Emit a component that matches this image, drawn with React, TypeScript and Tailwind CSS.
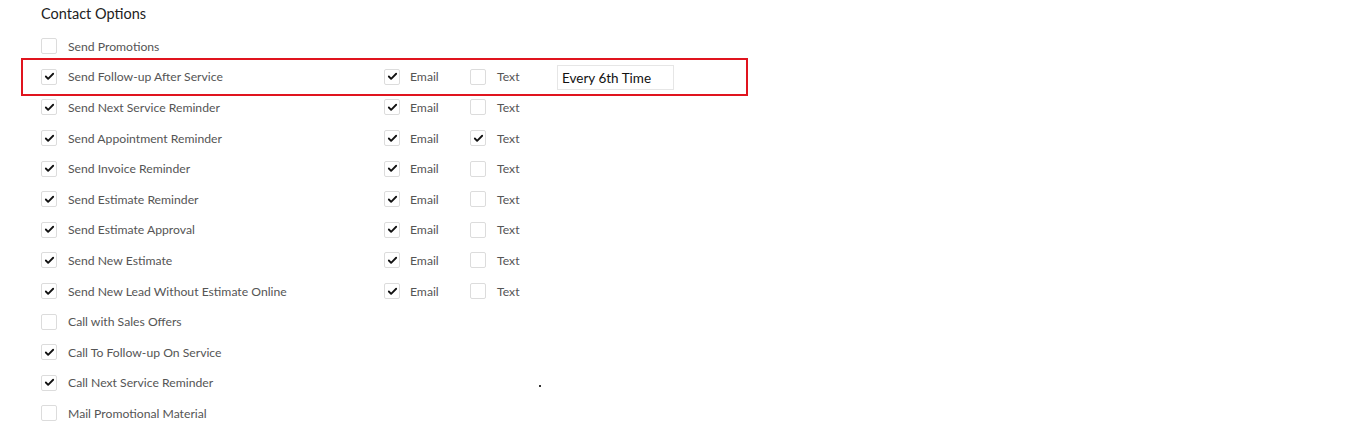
import { Check } from "lucide-react";

type Row = {
  label: string;
  checked: boolean;
  email?: boolean;
  text?: boolean;
  freq?: string;
  highlight?: boolean;
};

const rows: Row[] = [
  { label: "Send Promotions", checked: false },
  { label: "Send Follow-up After Service", checked: true, email: true, text: false, freq: "Every 6th Time", highlight: true },
  { label: "Send Next Service Reminder", checked: true, email: true, text: false },
  { label: "Send Appointment Reminder", checked: true, email: true, text: true },
  { label: "Send Invoice Reminder", checked: true, email: true, text: false },
  { label: "Send Estimate Reminder", checked: true, email: true, text: false },
  { label: "Send Estimate Approval", checked: true, email: true, text: false },
  { label: "Send New Estimate", checked: true, email: true, text: false },
  { label: "Send New Lead Without Estimate Online", checked: true, email: true, text: false },
  { label: "Call with Sales Offers", checked: false },
  { label: "Call To Follow-up On Service", checked: true },
  { label: "Call Next Service Reminder", checked: true },
  { label: "Mail Promotional Material", checked: false },
];

function Box({ checked }: { checked: boolean }) {
  return (
    <span className="flex h-4 w-4 shrink-0 items-center justify-center rounded-[2px] border border-[#dcdcdc] bg-white">
      {checked && <Check className="h-[11px] w-[11px] text-[#111]" strokeWidth={4} />}
    </span>
  );
}

export default function App() {
  return (
    <div className="relative h-[428px] w-[1366px] bg-white font-['Lato','Open_Sans',sans-serif]">
      <div className="pl-[41px] pt-[4px]">
        <h2 className="h-[20px] text-[14.5px] leading-[20px] text-[#222]">Contact Options</h2>
        <div className="mt-[7px]">
          {rows.map((r) => (
            <div key={r.label} className="relative flex h-[30.6px] items-center text-[12.2px] leading-[16px] text-[#555]">
              {r.highlight && (
                <div className="pointer-events-none absolute -left-[20px] top-[-4px] h-[38px] w-[727px] border-2 border-[#e0141e]" />
              )}
              <Box checked={r.checked} />
              <span className="ml-[11px] mt-[1px] w-[316px]">{r.label}</span>
              {r.email !== undefined && (
                <>
                  <Box checked={r.email} />
                  <span className="ml-[10px] mt-[1px] w-[60px]">Email</span>
                  <Box checked={!!r.text} />
                  <span className="ml-[11px] mt-[1px] w-[60px]">Text</span>
                </>
              )}
              {r.freq && (
                <div className="mt-[2px] flex h-[25px] w-[117px] items-center border border-[#e6e6e6] pl-[4px] text-[13.5px] text-[#111]">
                  {r.freq}
                </div>
              )}
            </div>
          ))}
        </div>
      </div>
      <span className="absolute left-[539px] top-[385px] h-[2px] w-[2px] bg-[#333]" />
    </div>
  );
}
